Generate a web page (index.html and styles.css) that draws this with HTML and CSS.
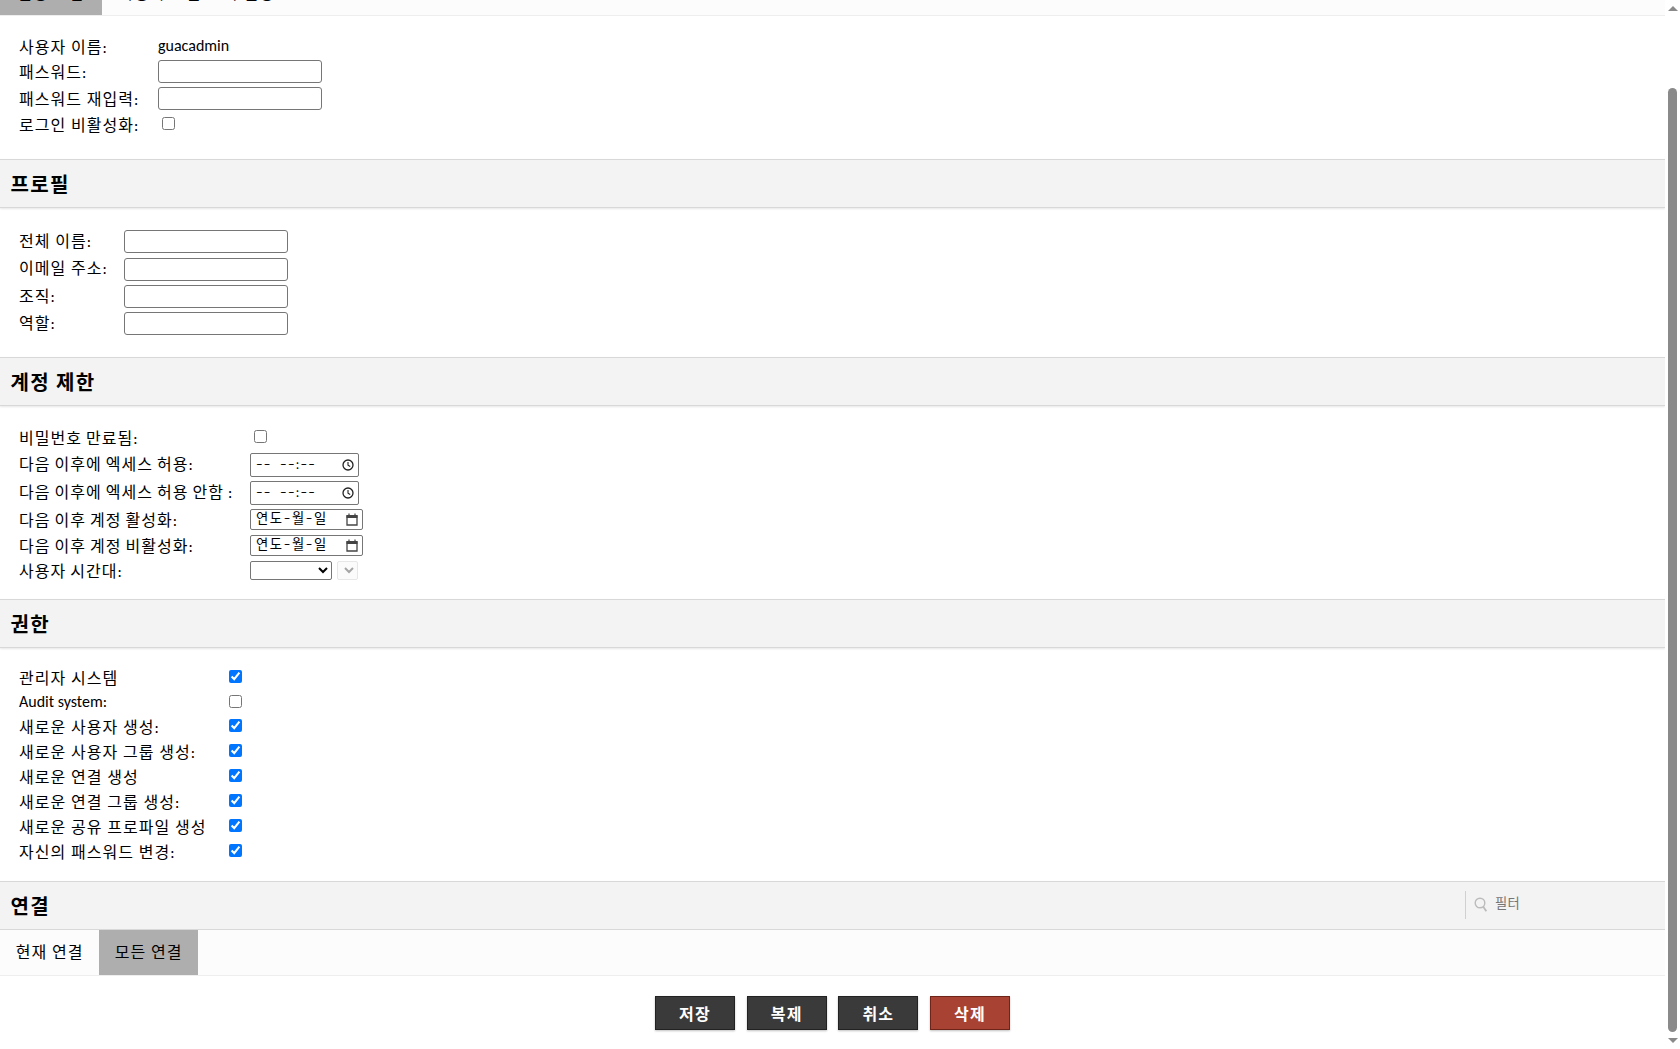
FILE: index.html
```html
<!DOCTYPE html>
<html lang="ko">
<head>
<meta charset="utf-8">
<title>guacadmin</title>
<link rel="stylesheet" href="styles.css">
</head>
<body>
<div class="app">
<main class="page">
  <nav class="tabs tabs-top">
    <a class="tab current">설정 편집</a><a class="tab">사용자 그룹 보기 설정</a>
  </nav>
  <section class="form form-account">
    <table>
      <tr class="row-val"><th>사용자 이름:</th><td class="latin val">guacadmin</td></tr>
      <tr><th>패스워드:</th><td><input class="text" type="password"></td></tr>
      <tr><th>패스워드 재입력:</th><td><input class="text" type="password"></td></tr>
      <tr class="row-val"><th>로그인 비활성화:</th><td><input class="check" type="checkbox"></td></tr>
    </table>
  </section>
  <h2 class="header">프로필</h2>
  <section class="form form-profile">
    <table>
      <tr><th>전체 이름:</th><td><input class="text" type="text"></td></tr>
      <tr class="row-tall"><th>이메일 주소:</th><td><input class="text" type="text"></td></tr>
      <tr><th>조직:</th><td><input class="text" type="text"></td></tr>
      <tr><th>역할:</th><td><input class="text" type="text"></td></tr>
    </table>
  </section>
  <h2 class="header">계정 제한</h2>
  <section class="form form-limits">
    <table>
      <tr class="row-check"><th>비밀번호 만료됨:</th><td><input class="check" type="checkbox"></td></tr>
      <tr class="row-time"><th>다음 이후에 엑세스 허용:</th><td>
        <div class="field field-time"><span class="field-text">––  ––:––</span>
          <svg viewBox="0 0 12 12" width="12" height="12"><circle cx="6" cy="6" r="5" fill="none" stroke="#222" stroke-width="1.3"/><path d="M6 3v3.2l2.2 1.3" fill="none" stroke="#222" stroke-width="1.1"/></svg></div>
      </td></tr>
      <tr class="row-time-last"><th>다음 이후에 엑세스 허용 안함 :</th><td>
        <div class="field field-time"><span class="field-text">––  ––:––</span>
          <svg viewBox="0 0 12 12" width="12" height="12"><circle cx="6" cy="6" r="5" fill="none" stroke="#222" stroke-width="1.3"/><path d="M6 3v3.2l2.2 1.3" fill="none" stroke="#222" stroke-width="1.1"/></svg></div>
      </td></tr>
      <tr class="row-date"><th>다음 이후 계정 활성화:</th><td>
        <div class="field field-date"><span class="field-text">연도–월–일</span>
          <svg viewBox="0 0 12 13" width="12" height="13"><path d="M1 3h10v9H1z" fill="none" stroke="#444" stroke-width="1.3"/><path d="M.5 2h11v3H.5z" fill="#444"/><path d="M3 .5v2M9 .5v2" stroke="#444" stroke-width="1.2"/></svg></div>
      </td></tr>
      <tr class="row-date"><th>다음 이후 계정 비활성화:</th><td>
        <div class="field field-date"><span class="field-text">연도–월–일</span>
          <svg viewBox="0 0 12 13" width="12" height="13"><path d="M1 3h10v9H1z" fill="none" stroke="#444" stroke-width="1.3"/><path d="M.5 2h11v3H.5z" fill="#444"/><path d="M3 .5v2M9 .5v2" stroke="#444" stroke-width="1.2"/></svg></div>
      </td></tr>
      <tr class="row-zone"><th>사용자 시간대:</th><td><div class="tz"><select class="zone"><option></option></select><select class="zone-sub" disabled><option></option></select></div></td></tr>
    </table>
  </section>
  <h2 class="header">권한</h2>
  <section class="form form-perms">
    <table>
      <tr><th>관리자 시스템</th><td><input class="check" type="checkbox" checked></td></tr>
      <tr class="row-short"><th class="latin">Audit system:</th><td><input class="check" type="checkbox"></td></tr>
      <tr><th>새로운 사용자 생성:</th><td><input class="check" type="checkbox" checked></td></tr>
      <tr><th>새로운 사용자 그룹 생성:</th><td><input class="check" type="checkbox" checked></td></tr>
      <tr><th>새로운 연결 생성</th><td><input class="check" type="checkbox" checked></td></tr>
      <tr><th>새로운 연결 그룹 생성:</th><td><input class="check" type="checkbox" checked></td></tr>
      <tr><th>새로운 공유 프로파일 생성</th><td><input class="check" type="checkbox" checked></td></tr>
      <tr><th>자신의 패스워드 변경:</th><td><input class="check" type="checkbox" checked></td></tr>
    </table>
  </section>
  <h2 class="header header-filter">
    <span>연결</span>
    <span class="filter">
      <svg class="search" viewBox="0 0 14 15" width="14" height="15"><circle cx="6" cy="6" r="4.8" fill="none" stroke="#bbb" stroke-width="1.4"/><path d="M9.3 9.8l3 4.4" fill="none" stroke="#bbb" stroke-width="1.8"/></svg>
      <input class="filter-input" type="text" placeholder="필터">
    </span>
  </h2>
  <nav class="tabs tabs-conn">
    <a class="tab">현재 연결</a><a class="tab current">모든 연결</a>
  </nav>
  <div class="actions">
    <button class="btn">저장</button><button class="btn">복제</button><button class="btn">취소</button><button class="btn danger">삭제</button>
  </div>
</main>
<aside class="scrollbar">
  <span class="arrow up"></span>
  <span class="track"><span class="thumb"></span></span>
  <span class="arrow down"></span>
</aside>
</div>
</body>
</html>
```
FILE: styles.css
```css
html, body { margin: 0; height: 100%; overflow: hidden; background: #fff; }
body { font-family: Carlito, Lato, "Noto Sans CJK KR", sans-serif; font-size: 16px; letter-spacing: 1.05px; color: #000; }
.app { display: flex; height: 1049px; }
.page { flex: 1; min-width: 0; overflow: hidden; }

.tabs { display: flex; background: #fcfcfc; border-bottom: 1px solid #eee; }
.tabs-top { height: 44px; margin-top: -29px; }
.tabs-top .tab { padding: 0 17px; line-height: 45px; height: 44px; }
.tabs-conn { height: 45px; }
.tab { display: block; padding: 0 15.7px; line-height: 46px; white-space: nowrap; }
.tab.current { background: #aeaeae; }

.header { display: flex; align-items: center; justify-content: space-between; box-sizing: border-box; height: 49px; margin: 0; padding: 0 10.5px; background: #f3f3f3; border-top: 1px solid #d8d8d8; border-bottom: 1px solid #d8d8d8; box-shadow: 0 1px 2px rgba(0,0,0,.1); font-size: 20px; letter-spacing: 1.4px; font-weight: bold; }

.form { box-sizing: border-box; padding-left: 17px; }
.form-account { height: 143px; padding-top: 18px; }
.form-profile { height: 149px; padding-top: 20px; }
.form-limits { height: 193px; padding-top: 18px; }
.form-perms { height: 233px; padding-top: 17px; }

table { border-collapse: collapse; }
th { box-sizing: border-box; padding: 3px 2px 0; font-weight: normal; line-height: 20px; text-align: left; white-space: nowrap; }
td { padding: 0; line-height: 20px; }
.latin { letter-spacing: 0; }
.val { padding-bottom: 1px; }
.form-account th { min-width: 141px; height: 27px; }
.form-account .row-val th { height: 24px; }
.form-profile th { min-width: 107px; height: 27px; padding-top: 0; }
.form-profile .row-tall th { height: 28px; }
.form-limits th { min-width: 233px; word-spacing: -.7px; }
.row-check th { height: 27px; }
.row-time th { height: 28px; padding-top: 0; }
.row-time-last th { height: 27px; padding-top: 0; }
.row-date th { height: 26px; }
.row-zone th { height: 24px; }
.form-perms th { min-width: 212px; height: 25px; padding-top: 2px; }
.form-perms .row-short th { height: 24px; padding-top: 0; }

input, select { font: inherit; letter-spacing: 0; }
.text { box-sizing: border-box; display: block; width: 164px; height: 23px; margin: 0; padding: 1px 2px; border: 1px solid #767676; border-radius: 3px; background: #fff; }
.check { display: block; width: 13px; height: 13px; margin: 0 0 2px 4px; }
.form-perms .check { margin: 0 0 2px; }

.field { box-sizing: border-box; display: flex; align-items: center; justify-content: space-between; padding: 0 4px 0 5px; border: 1px solid #767676; border-radius: 2px; font-size: 13.3px; letter-spacing: 1.2px; background: #fff; }
.field-text { white-space: pre; }
.field-time { width: 109px; height: 24px; }
.field-date { width: 113px; height: 21px; letter-spacing: 1.6px; }

.tz { display: flex; gap: 5px; }
.zone { box-sizing: border-box; width: 82px; height: 19px; border: 1px solid #767676; border-radius: 2px; background: #fff; }
.zone-sub { box-sizing: border-box; width: 21px; height: 19px; border: 1px solid #ddd; border-radius: 2px; background: #fafafa; }

.filter { display: flex; align-items: center; height: 28px; width: 200px; border-left: 1px solid #d0d0d0; padding-left: 8px; box-sizing: border-box; margin: 0 -10.5px 2px 0; }
.search { flex: none; }
.filter-input { flex: 1; min-width: 0; margin: 0 0 2px 7px; border: 0; outline: 0; padding: 0; background: transparent; font-size: 13.3px; font-weight: normal; letter-spacing: .3px; }
.filter-input::placeholder { color: #757575; }

.actions { display: flex; justify-content: center; gap: 11.67px; padding-top: 20px; }
.btn { box-sizing: border-box; width: 80px; height: 34px; padding: 0; border: 1px solid #222; background: #3a3a3a; color: #fff; font: bold 16px Carlito, Lato, "Noto Sans CJK KR", sans-serif; letter-spacing: 1.2px; box-shadow: 0 1px 2px rgba(0,0,0,.25); }
.btn.danger { background: #a84333; border-color: #6e2418; }

.scrollbar { flex: none; width: 15px; display: flex; flex-direction: column; align-items: center; background: #fff; }
.track { flex: 1; align-self: stretch; padding: 88px 3px 17px; display: flex; box-sizing: border-box; }
.thumb { flex: 1; background: #8a8a8a; border-radius: 5px; }
.arrow { position: absolute; width: 0; height: 0; border-left: 5px solid transparent; border-right: 5px solid transparent; }
.arrow.up { top: 6px; border-bottom: 5px solid #8a8a8a; }
.arrow.down { bottom: 6px; border-top: 5px solid #8a8a8a; }
```
